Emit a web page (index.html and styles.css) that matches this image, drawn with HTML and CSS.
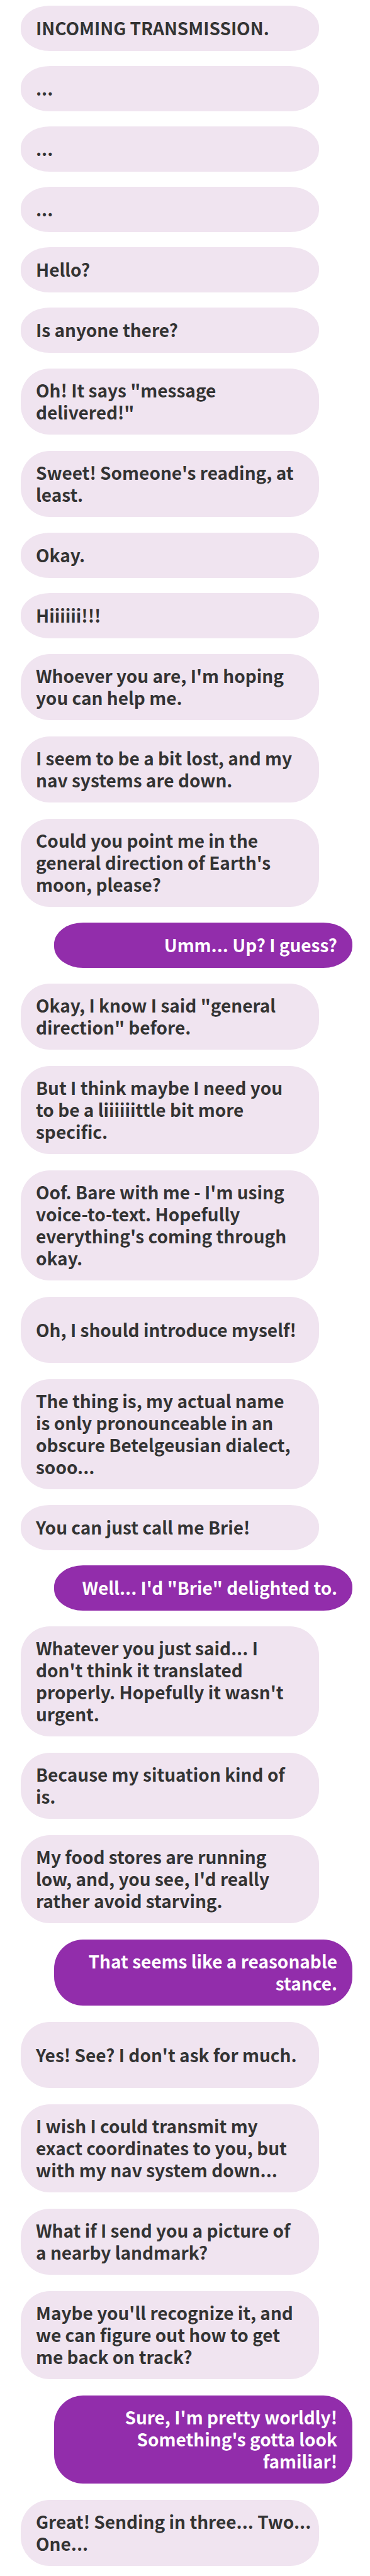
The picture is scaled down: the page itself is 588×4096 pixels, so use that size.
FILE: index.html
```html
<!DOCTYPE html>
<html lang="en">
<head>
<meta charset="utf-8">
<meta name="viewport" content="width=device-width, initial-scale=1">
<title>Incoming transmission</title>
<link rel="stylesheet" href="styles.css">
</head>
<body>
<main class="chat">
  <p class="bubble short">INCOMING TRANSMISSION.</p>
  <p class="bubble short">...</p>
  <p class="bubble short">...</p>
  <p class="bubble short">...</p>
  <p class="bubble short">Hello?</p>
  <p class="bubble short">Is anyone there?</p>
  <p class="bubble">Oh! It says "message<br>delivered!"</p>
  <p class="bubble">Sweet! Someone's reading, at<br>least.</p>
  <p class="bubble short">Okay.</p>
  <p class="bubble short">Hiiiiii!!!</p>
  <p class="bubble">Whoever you are, I'm hoping<br>you can help me.</p>
  <p class="bubble">I seem to be a bit lost, and my<br>nav systems are down.</p>
  <p class="bubble">Could you point me in the<br>general direction of Earth's<br>moon, please?</p>
  <p class="bubble short sent">Umm... Up? I guess?</p>
  <p class="bubble">Okay, I know I said "general<br>direction" before.</p>
  <p class="bubble">But I think maybe I need you<br>to be a liiiiiittle bit more<br>specific.</p>
  <p class="bubble">Oof. Bare with me - I'm using<br>voice-to-text. Hopefully<br>everything's coming through<br>okay.</p>
  <p class="bubble">Oh, I should introduce myself!</p>
  <p class="bubble">The thing is, my actual name<br>is only pronounceable in an<br>obscure Betelgeusian dialect,<br>sooo...</p>
  <p class="bubble short">You can just call me Brie!</p>
  <p class="bubble short sent">Well... I'd "Brie" delighted to.</p>
  <p class="bubble">Whatever you just said... I<br>don't think it translated<br>properly. Hopefully it wasn't<br>urgent.</p>
  <p class="bubble">Because my situation kind of<br>is.</p>
  <p class="bubble">My food stores are running<br>low, and, you see, I'd really<br>rather avoid starving.</p>
  <p class="bubble sent">That seems like a reasonable<br>stance.</p>
  <p class="bubble">Yes! See? I don't ask for much.</p>
  <p class="bubble">I wish I could transmit my<br>exact coordinates to you, but<br>with my nav system down...</p>
  <p class="bubble">What if I send you a picture of<br>a nearby landmark?</p>
  <p class="bubble">Maybe you'll recognize it, and<br>we can figure out how to get<br>me back on track?</p>
  <p class="bubble sent">Sure, I'm pretty worldly!<br>Something's gotta look<br>familiar!</p>
  <p class="bubble">Great! Sending in three... Two...<br>One...</p>
</main>
</body>
</html>
```
FILE: styles.css
```css
* {
  box-sizing: border-box;
}

body {
  margin: 0;
  background: #fff;
  color: #333;
  font: 700 28px/35px "Noto Sans CJK SC", "Open Sans", sans-serif;
}

.chat {
  display: flex;
  flex-direction: column;
  align-items: flex-start;
  padding: 0 28px 0 33px;
}

.bubble {
  width: 90%;
  min-height: 105px;
  margin: 13px 0;
  padding: 17px 8px 18px 24px;
  border-radius: 46px;
  background: #f0e4f0;
  align-content: center;
}

.short {
  min-height: 72px;
  margin: 12px 0;
  border-radius: 46px / 34px;
}

.bubble:first-child {
  margin-top: 9px;
}

.sent {
  align-self: flex-end;
  padding: 17px 24px 18px 8px;
  background: #922dab;
  color: #fff;
  text-align: right;
}
```
